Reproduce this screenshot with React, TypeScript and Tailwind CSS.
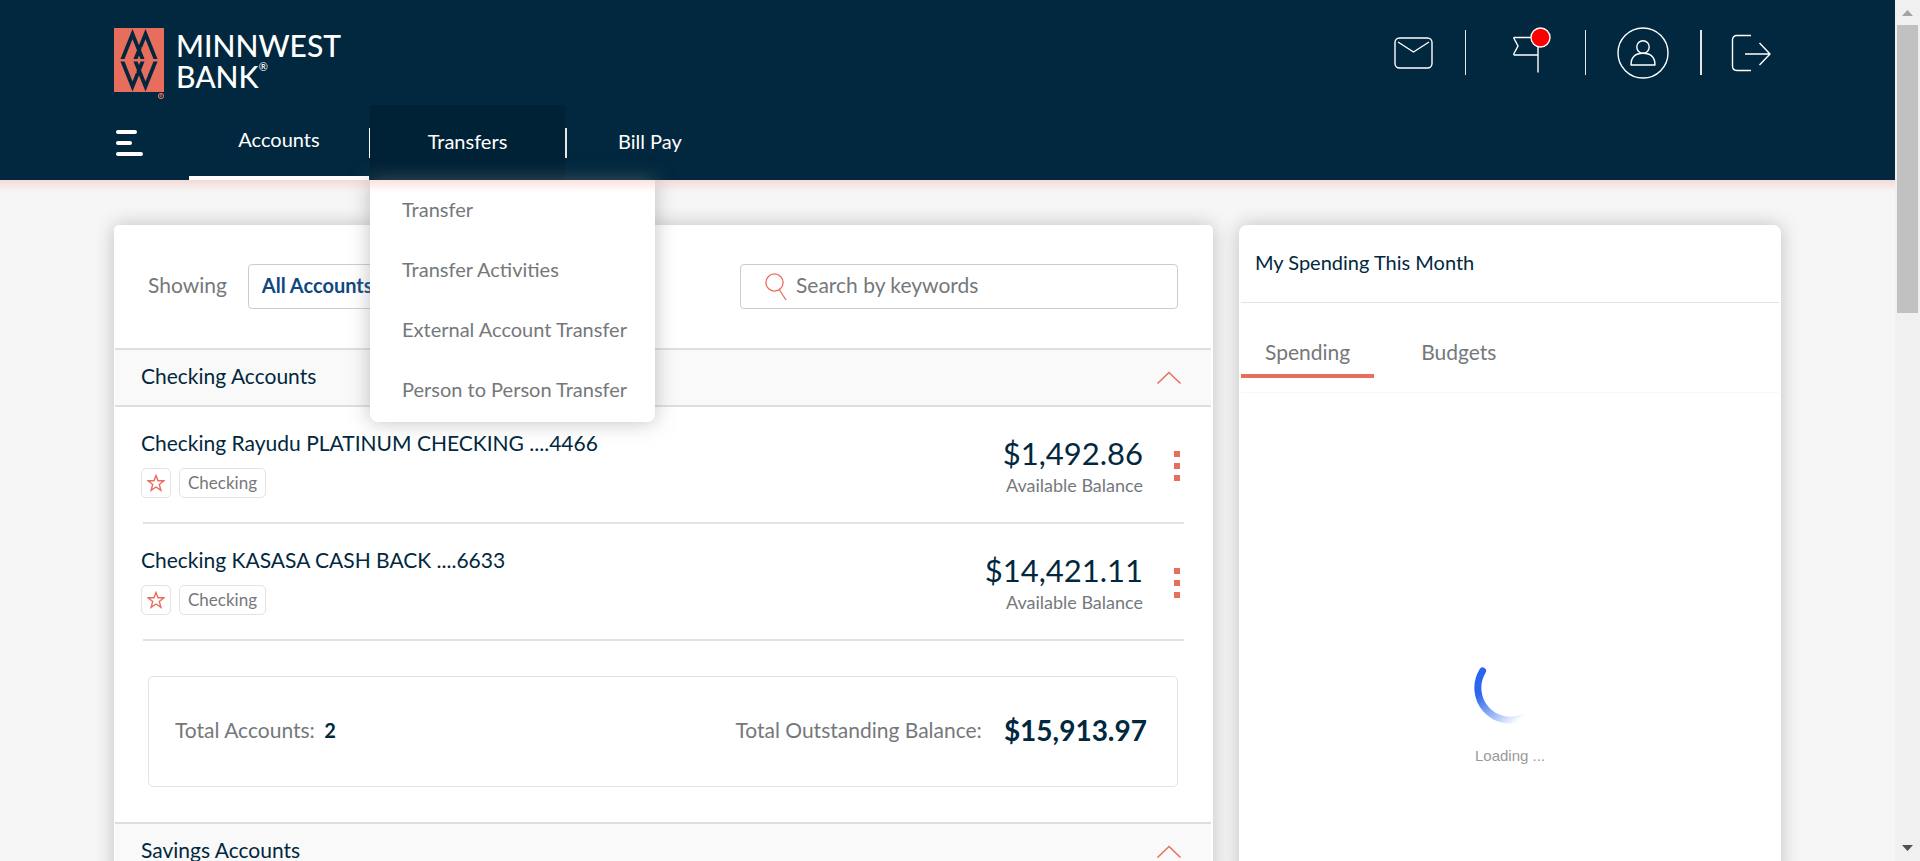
import type { ReactNode } from 'react';

const transferLinks = ['Transfer', 'Transfer Activities', 'External Account Transfer', 'Person to Person Transfer'];

const checkingAccounts = [
  { name: 'Checking Rayudu PLATINUM CHECKING ....4466', type: 'Checking', balance: '$1,492.86' },
  { name: 'Checking KASASA CASH BACK ....6633', type: 'Checking', balance: '$14,421.11' },
];

function Logo() {
  return (
    <a href="#home" className="flex items-start gap-[10px] text-white">
      <svg width="52" height="72" viewBox="0 0 52 72" aria-hidden="true">
        <defs>
          <clipPath id="upper"><rect width="50" height="31" /></clipPath>
          <clipPath id="lower"><rect y="33.500" width="50" height="31" /></clipPath>
        </defs>
        <rect width="50" height="64" fill="#e76d5d" />
        <g fill="none" stroke="#01283e" strokeWidth="3.800">
          <path clipPath="url(#upper)" d="M6.500 36L18.500 6L30.500 36M19.500 36L31.500 6L43.500 36" />
          <path clipPath="url(#lower)" d="M6.500 28.500L18.500 58.500L30.500 28.500M19.500 28.500L31.500 58.500L43.500 28.500" />
        </g>
        <path d="M27.500 19.500L31 27M22.500 45L19 37.500" stroke="#e76d5d" strokeWidth=".8" />
        <circle cx="47" cy="68" r="2.700" fill="none" stroke="#e76d5d" />
        <path d="M46 69.500v-3h1.300a.8.8 0 0 1 0 1.600H46M47.300 68.200l.8 1.300" fill="none" stroke="#e76d5d" strokeWidth=".7" />
      </svg>
      <span className="flex flex-col pt-[2px] text-[30px] leading-[31px] font-medium">
        <span>MINNWEST</span>
        <span className="flex items-start">
          BANK<span className="text-[11px] leading-[12px]">®</span>
        </span>
      </span>
    </a>
  );
}

function MailIcon() {
  return (
    <svg width="39" height="32" viewBox="0 0 39 32" fill="none" stroke="#fff" strokeWidth="1.400" aria-hidden="true">
      <rect x="1" y="1" width="37" height="30" rx="4.500" />
      <path d="M4 5L19.500 15L35 5" />
    </svg>
  );
}

function FlagIcon() {
  return (
    <svg width="40" height="48" viewBox="0 0 40 48" fill="none" stroke="#fff" strokeWidth="1.400" className="overflow-visible" aria-hidden="true">
      <path d="M26 43.500V8.500H2.500Q1.500 8.500 2 9.500L6 17L2 24.500Q1.500 26 2.500 26H26" />
      <circle cx="28.500" cy="8.500" r="9.500" fill="#f00" />
    </svg>
  );
}

function ProfileIcon() {
  return (
    <svg width="52" height="52" viewBox="0 0 52 52" fill="none" stroke="#fff" strokeWidth="1.400" aria-hidden="true">
      <circle cx="26" cy="26" r="25" />
      <circle cx="26" cy="20" r="6.200" />
      <path d="M14 38Q14 26.200 26 26.200Q38 26.200 38 38Z" strokeLinejoin="round" />
    </svg>
  );
}

function LogoutIcon() {
  return (
    <svg width="40" height="38" viewBox="0 0 40 38" fill="none" stroke="#fff" strokeWidth="1.400" aria-hidden="true">
      <path d="M20 1.500H6Q1.500 1.500 1.500 6V32Q1.500 36.500 6 36.500H20" />
      <path d="M14 20H39M28.500 9L39 20L28.500 31" />
    </svg>
  );
}

function SearchIcon() {
  return (
    <svg width="22" height="28" viewBox="0 0 22 28" fill="none" stroke="#e76d5d" strokeWidth="1.300" aria-hidden="true">
      <circle cx="9.500" cy="9.500" r="8.600" />
      <path d="M14.500 17L21 27" />
    </svg>
  );
}

function StarIcon() {
  return (
    <svg width="18" height="18" viewBox="0 0 18 18" fill="none" stroke="#e76d5d" strokeWidth="1.400" aria-hidden="true">
      <path d="M9 1.500L11 6.800H16.800L12.300 10.400L13.900 16.300L9 13L4.100 16.300L5.700 10.400L1.200 6.800H7Z" />
    </svg>
  );
}

function Spinner() {
  return (
    <svg width="72" height="72" viewBox="0 0 72 72" fill="none" aria-hidden="true">
      <defs>
        <linearGradient id="sweep" x1="6" y1="22" x2="46" y2="68" gradientUnits="userSpaceOnUse">
          <stop offset="0" stopColor="#2a63ee" />
          <stop offset=".25" stopColor="#2f68ef" />
          <stop offset="1" stopColor="#2f68ef" stopOpacity="0" />
        </linearGradient>
      </defs>
      <path d="M8.600 19A32.300 32.300 0 0 0 49 65.500" stroke="url(#sweep)" strokeWidth="7" strokeLinecap="round" />
    </svg>
  );
}

function SectionHeader({ title }: { title: string }) {
  return (
    <button
      type="button"
      aria-expanded="true"
      className="flex h-[59px] w-full shrink-0 items-center justify-between border-y-2 border-[#dedede] bg-[#f9f9f9] pl-[26px] pr-[29px] text-left text-[21px] leading-[24px]"
    >
      <span className="pb-[3px]">{title}</span>
      <svg width="26" height="14" viewBox="0 0 26 14" fill="none" stroke="#e76d5d" strokeWidth="1.500" aria-hidden="true">
        <path d="M1.500 12.500L13 1.500L24.500 12.500" />
      </svg>
    </button>
  );
}

function IconLink({ label, children }: { label: string; children: ReactNode }) {
  return (
    <a href="#tools" aria-label={label} className="flex items-center justify-center">
      {children}
    </a>
  );
}

function Header() {
  return (
    <header className="relative z-10 flex h-[180px] shrink-0 flex-col justify-between bg-[#01283e] text-white">
      <div className="flex items-start justify-between pt-[26px] pl-[114px] pr-[124px]">
        <div className="pt-[2px]">
          <Logo />
        </div>
        <div className="flex h-[53px] items-center">
          <IconLink label="Messages"><MailIcon /></IconLink>
          <span className="ml-[32px] h-[45px] w-px bg-[#e6e6e6]" />
          <span className="ml-[46px]"><IconLink label="Alerts"><FlagIcon /></IconLink></span>
          <span className="ml-[33px] h-[45px] w-px bg-[#e6e6e6]" />
          <span className="ml-[31px]"><IconLink label="Profile"><ProfileIcon /></IconLink></span>
          <span className="ml-[31px] h-[45px] w-[2px] bg-[#e6e6e6]" />
          <span className="ml-[29px]"><IconLink label="Log out"><LogoutIcon /></IconLink></span>
        </div>
      </div>
      <nav className="flex h-[75px] items-stretch pl-[116px] text-[20px] leading-[24px]">
        <button type="button" aria-label="Menu" className="flex w-[73px] flex-col items-start justify-center gap-[7px]">
          <span className="h-[4px] w-[21px] rounded-sm bg-white" />
          <span className="h-[4px] w-[16px] rounded-sm bg-white" />
          <span className="h-[4px] w-[27px] rounded-sm bg-white" />
        </button>
        <a href="#accounts" className="flex w-[180px] items-center justify-center border-b-4 border-white pb-[3px]">
          Accounts
        </a>
        <span className="h-[30px] w-px self-center bg-white" />
        <div className="relative flex w-[195px] bg-[#002236]">
          <a href="#transfers" className="flex flex-1 items-center justify-center pb-[3px]">Transfers</a>
          <ul className="absolute top-full left-0 w-[285px] rounded-b-lg bg-white pb-[2px] text-[#75787b] shadow-[0_0_20px_rgba(130,130,130,0.5)]">
            {transferLinks.map((label) => (
              <li key={label}>
                <a href="#transfers" className="flex h-[60px] items-center pb-[3px] pl-[32px] whitespace-nowrap">{label}</a>
              </li>
            ))}
          </ul>
        </div>
        <span className="h-[30px] w-[2px] self-center bg-[#e6e6e6]" />
        <a href="#billpay" className="flex items-center px-[51px] pb-[3px]">Bill Pay</a>
      </nav>
      <div className="pointer-events-none absolute inset-x-0 top-full h-[12px] bg-gradient-to-b from-[#e76d5d]/20 to-transparent" />
    </header>
  );
}

function AccountsCard() {
  return (
    <section className="flex min-w-0 flex-col rounded-[5px] bg-white pl-px pr-[2px] shadow-[0_0_20px_rgba(0,0,0,0.22)]">
      <div className="flex h-[123px] shrink-0 items-center justify-between pl-[33px] pr-[33px]">
        <label className="flex items-center text-[21px] leading-[24px] text-[#75787b]">
          <span className="pb-[3px]">Showing</span>
          <select className="ml-[21px] h-[45px] w-[300px] appearance-none rounded border border-[#ccc] bg-white px-[13px] pb-[3px] text-[20px] font-bold text-[#0f4880]">
            <option>All Accounts</option>
          </select>
        </label>
        <label className="flex h-[45px] w-[438px] items-center gap-[9px] rounded border border-[#ccc] pl-[24px]">
          <SearchIcon />
          <input
            type="search"
            aria-label="Search by keywords"
            placeholder="Search by keywords"
            className="min-w-0 flex-1 bg-transparent pb-[3px] text-[21px] leading-[24px] outline-none placeholder:text-[#75787b]"
          />
        </label>
      </div>
      <SectionHeader title="Checking Accounts" />
      <ul className="pl-[28px] pr-[27px]">
        {checkingAccounts.map((account) => (
          <li key={account.name} className="flex h-[117px] items-start justify-between border-b-2 border-[#e3e3e3]">
            <div className="-ml-[2px] pt-[24px]">
              <a href="#account" className="block text-[21px] leading-[24px]">{account.name}</a>
              <div className="mt-[13px] flex gap-[8px]">
                <button type="button" aria-label="Favorite" className="flex size-[30px] items-center justify-center rounded-[5px] border border-[#e3e3e3]">
                  <StarIcon />
                </button>
                <span className="flex h-[30px] items-center rounded-[5px] border border-[#e3e3e3] px-[8px] text-[17px] text-[#75787b]">
                  {account.type}
                </span>
              </div>
            </div>
            <div className="flex">
              <div className="pt-[28px] text-right">
                <div className="text-[31px] leading-[36px]">{account.balance}</div>
                <div className="pt-[3px] text-[18px] leading-[22px] text-[#75787b]">Available Balance</div>
              </div>
              <button type="button" aria-label="Account options" className="flex flex-col gap-[6px] pt-[44px] pl-[31px] pr-[4px]">
                <span className="size-[6px] bg-[#e76d5d]" />
                <span className="size-[6px] bg-[#e76d5d]" />
                <span className="size-[6px] bg-[#e76d5d]" />
              </button>
            </div>
          </li>
        ))}
      </ul>
      <div className="mx-[33px] my-[35px] flex h-[111px] shrink-0 items-center justify-between rounded-[5px] border border-[#e3e3e3] pr-[30px] pb-[3px] pl-[26px] text-[21px] leading-[24px] text-[#75787b]">
        <p>
          Total Accounts: <strong className="ml-[4px] text-[20px] text-[#01283e]">2</strong>
        </p>
        <p className="flex items-center gap-[22px]">
          Total Outstanding Balance:
          <strong className="text-[28px] text-[#01283e]">$15,913.97</strong>
        </p>
      </div>
      <SectionHeader title="Savings Accounts" />
    </section>
  );
}

function SpendingCard() {
  return (
    <section className="min-w-0 rounded-lg bg-white px-[2px] text-[20px] leading-[24px] shadow-[0_0_20px_rgba(0,0,0,0.22)]">
      <h2 className="flex h-[78px] items-center border-b border-[#e3e3e3] pb-[3px] pl-[14px]">My Spending This Month</h2>
      <div role="tablist" className="flex h-[90px] items-end border-b border-[#f7f7f7] pb-[14px] text-[21px] text-[#75787b]">
        <button type="button" role="tab" aria-selected="true" className="h-[38px] border-b-4 border-[#e76d5d] px-[24px] pb-[10px]">
          Spending
        </button>
        <button type="button" role="tab" aria-selected="false" className="h-[38px] border-b-4 border-transparent px-[47px] pb-[10px]">
          Budgets
        </button>
      </div>
      <div className="flex flex-col items-center gap-[22px] pt-[259px] font-['Liberation_Sans',sans-serif] text-[15px] leading-[20px] text-[#999]">
        <Spinner />
        Loading ...
      </div>
    </section>
  );
}

function ScrollBar() {
  return (
    <div aria-hidden="true" className="flex w-[25px] shrink-0 flex-col items-center bg-[#f0f0f0] py-[10px]">
      <svg width="11" height="6" viewBox="0 0 11 6"><path d="M0 6L5.500 0L11 6Z" fill="#a3a3a3" /></svg>
      <div className="mt-[9px] h-[288px] w-[21px] bg-[#c1c1c1]" />
      <svg className="mt-auto" width="11" height="6" viewBox="0 0 11 6"><path d="M0 0L5.500 6L11 0Z" fill="#505050" /></svg>
    </div>
  );
}

export default function App() {
  return (
    <div className="flex h-screen bg-[#f6f6f6] font-[Lato,sans-serif] text-[#01283e]">
      <div className="flex min-w-0 flex-1 flex-col overflow-hidden">
        <Header />
        <main className="grid flex-1 grid-cols-[1099fr_542fr] gap-[26px] px-[114px] pt-[45px]">
          <AccountsCard />
          <SpendingCard />
        </main>
      </div>
      <ScrollBar />
    </div>
  );
}
